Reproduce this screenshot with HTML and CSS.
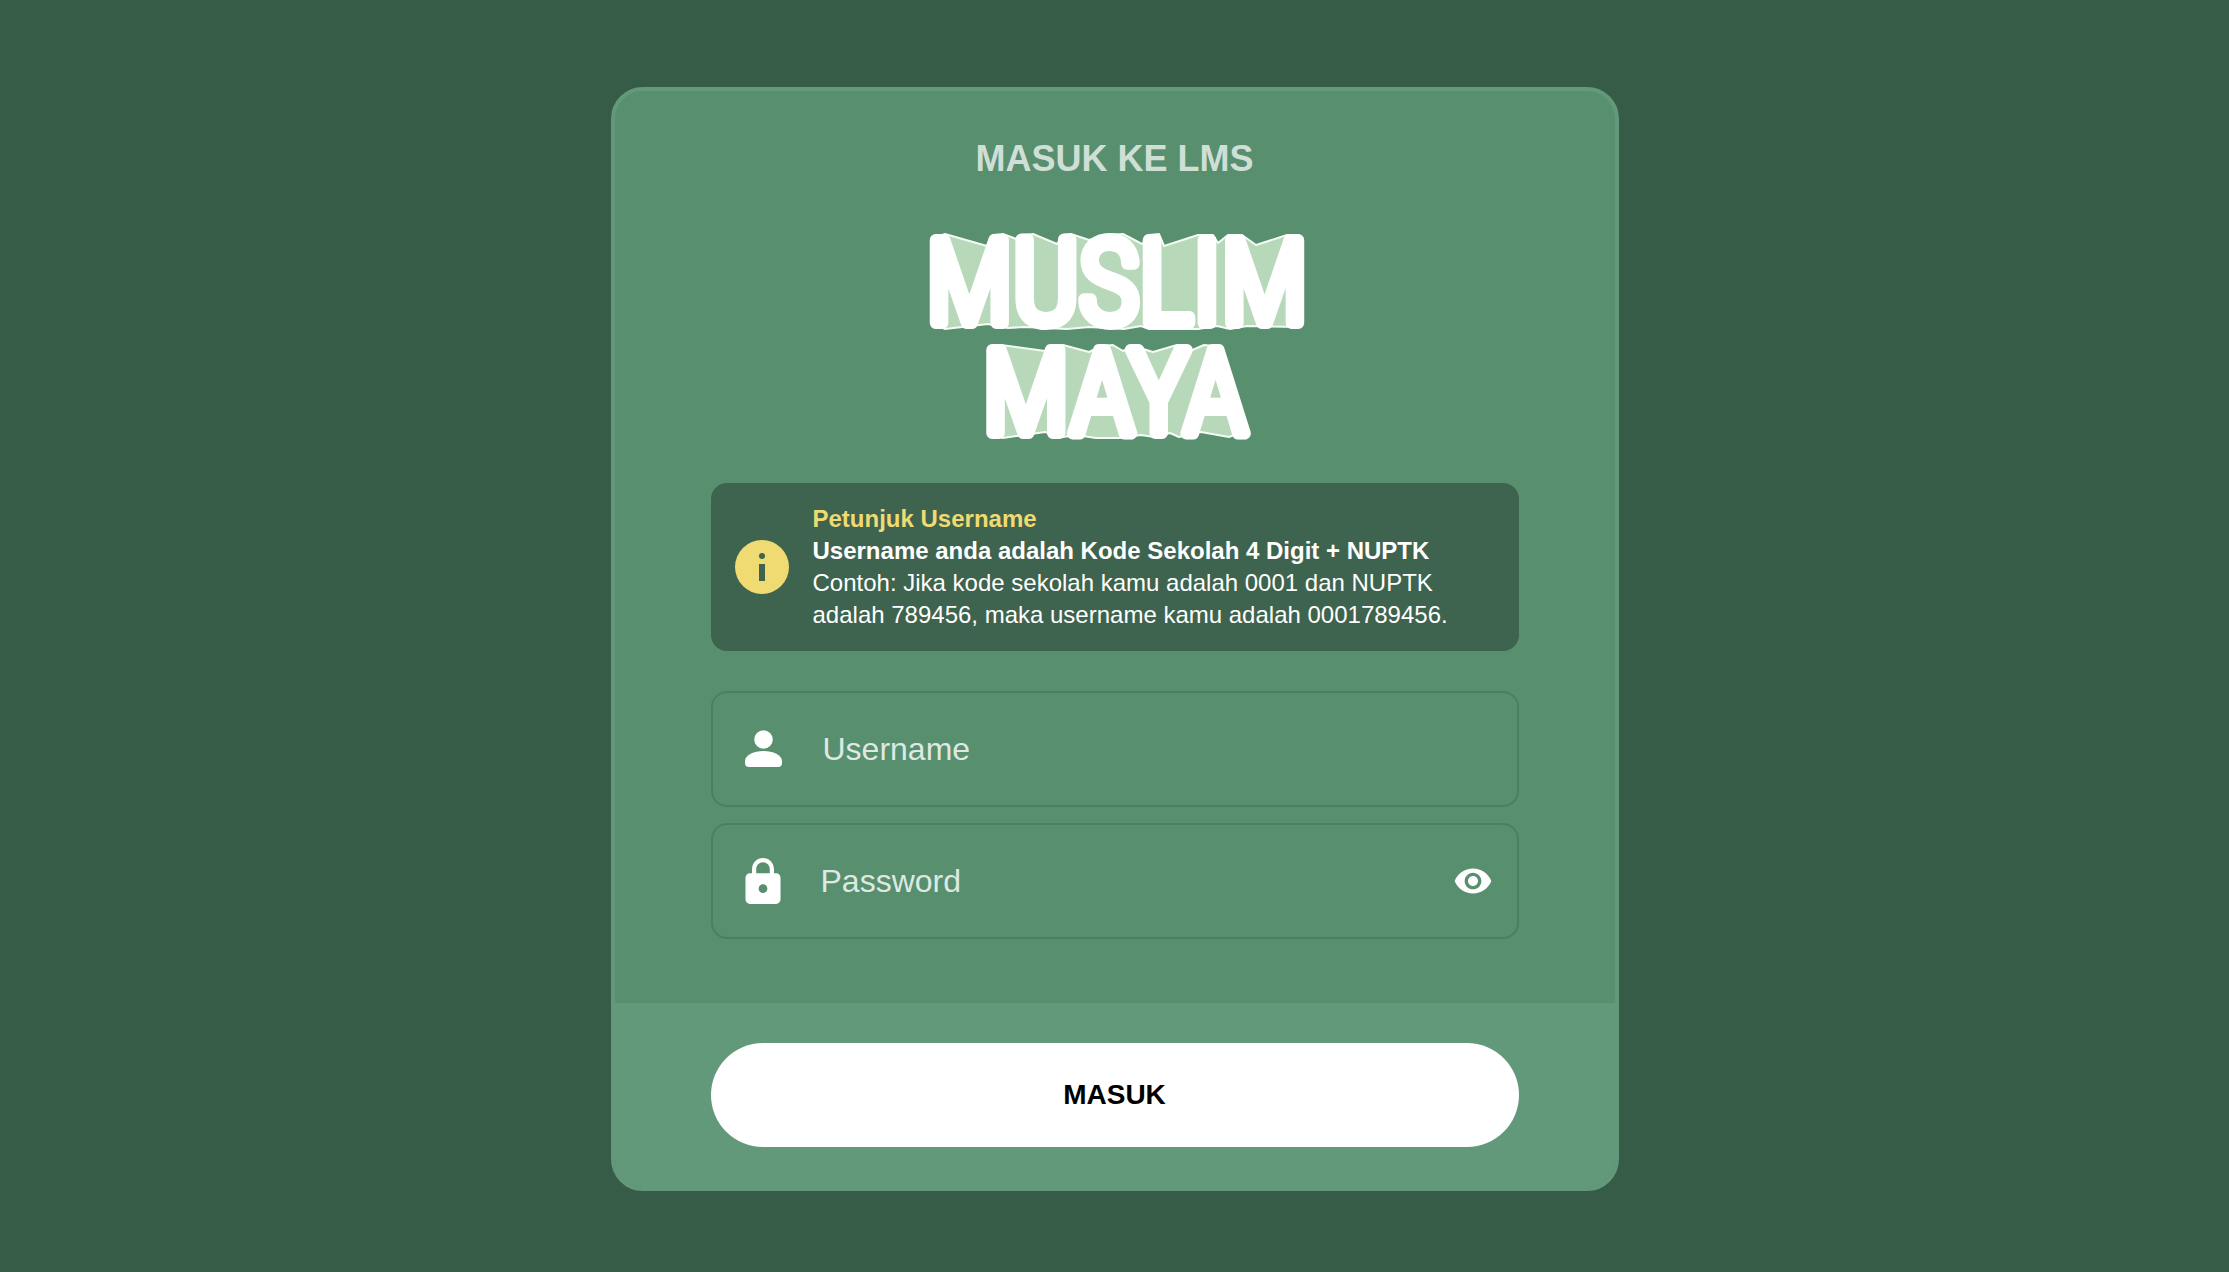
FILE: index.html
```html
<!DOCTYPE html>
<html lang="id">
<head>
<meta charset="utf-8">
<meta name="viewport" content="width=device-width, initial-scale=1">
<title>Masuk ke LMS</title>
<link rel="stylesheet" href="styles.css">
</head>
<body>
<main class="page">
  <form class="card">
    <div class="card-body">
      <h1 class="title">MASUK KE LMS</h1>
      <svg class="logo" viewBox="0 0 408 240" role="img" aria-label="Muslim Maya">
        <g class="logo-depth">
          <polygon points="34,19 76,31 82,20 92,19 108,25 114,20 122,19 146,29 152,20 160,19 178,25 195,20 212,19 231,29 238,20 248,19 253,31 287,20 302,20 307,28 317,20 331,20 345,30 376,20 386,24 386,112 336,111 319,114 306,111 287,114 238,114 230,111 213,114 178,112 156,114 113,112 97,113 77,109 34,114 26,110 26,22"/>
          <polygon points="90,130 134,136 142,131 152,130 178,137 190,131 202,130 212,136 222,131 242,137 266,130 279,136 293,130 304,131 328,218 318,222 290,217 268,222 259,218 243,222 230,220 208,223 185,223 165,220 152,222 134,217 92,223 82,219 82,131"/>
        </g>
        <text class="logo-text" x="206" y="108">MUSLIM</text>
        <text class="logo-text" x="204" y="218">MAYA</text>
      </svg>
      <section class="hint">
        <svg class="hint-icon" viewBox="0 0 54 54" aria-hidden="true">
          <circle class="hint-disc" cx="27" cy="27" r="27"/>
          <circle class="hint-mark" cx="27" cy="16" r="3"/>
          <path class="hint-mark" d="M24 24h6v17h-6z"/>
        </svg>
        <div class="hint-text">
          <h2 class="hint-title">Petunjuk Username</h2>
          <p><strong>Username anda adalah Kode Sekolah 4 Digit + NUPTK</strong></p>
          <p>Contoh: Jika kode sekolah kamu adalah 0001 dan NUPTK adalah 789456, maka username kamu adalah 0001789456.</p>
        </div>
      </section>
      <div class="fields">
        <div class="field">
          <label for="username" aria-label="Username">
            <svg class="icon" width="38" height="40" viewBox="1 0 38 40" aria-hidden="true">
              <circle cx="19.500" cy="10.500" r="9.300"/>
              <path d="M19.500 22C10 22 1 26 1 32v2q0 4 4 4h29q4 0 4-4v-2c0-6-9-10-18.500-10z"/>
            </svg>
          </label>
          <input class="input" id="username" type="text" placeholder="Username">
        </div>
        <div class="field">
          <label for="password" aria-label="Password">
            <svg class="icon" width="36" height="46" viewBox="4 1 16 21" aria-hidden="true">
              <path d="M18 8h-1V6c0-2.760-2.240-5-5-5S7 3.240 7 6v2H6c-1.100 0-2 .9-2 2v10c0 1.100.9 2 2 2h12c1.100 0 2-.9 2-2V10c0-1.100-.9-2-2-2zm-6 9c-1.100 0-2-.9-2-2s.9-2 2-2 2 .9 2 2-.9 2-2 2zM8.900 8V6c0-1.710 1.390-3.100 3.100-3.100s3.100 1.390 3.100 3.100v2z"/>
            </svg>
          </label>
          <input class="input" id="password" type="password" placeholder="Password">
          <button class="reveal" type="button" aria-label="Tampilkan password">
            <svg class="icon" width="40" height="40" viewBox="0 0 24 24" aria-hidden="true">
              <path d="M12 4.500C7 4.500 2.730 7.610 1 12c1.730 4.390 6 7.500 11 7.500s9.270-3.110 11-7.500c-1.730-4.390-6-7.500-11-7.500zM12 17c-2.760 0-5-2.240-5-5s2.240-5 5-5 5 2.240 5 5-2.240 5-5 5zm0-8c-1.660 0-3 1.340-3 3s1.340 3 3 3 3-1.340 3-3-1.340-3-3-3z"/>
            </svg>
          </button>
        </div>
      </div>
    </div>
    <div class="card-footer">
      <button class="submit" type="button">MASUK</button>
    </div>
  </form>
</main>
</body>
</html>
```
FILE: styles.css
```css
* {
  box-sizing: border-box;
}

body {
  margin: 0;
  background: #365c47;
  color: #fff;
  font-family: "Liberation Sans", Arial, sans-serif;
}

.page {
  display: flex;
  justify-content: center;
  padding: 87px 20px 80px;
}

.card {
  width: 100%;
  max-width: 1008px;
  border: 4px solid #62997b;
  border-radius: 32px;
  background: #578f6f;
  overflow: hidden;
}

.card-body {
  display: flex;
  flex-direction: column;
  padding: 48px 96px 64px;
}

.title {
  margin: 0 0 36px;
  color: #cfdfd6;
  font-size: 36px;
  line-height: 40px;
  text-align: center;
}

.logo {
  align-self: center;
  width: 408px;
  max-width: 100%;
  margin-bottom: 28px;
  overflow: visible;
}

.logo-depth {
  fill: #b8d8ba;
  stroke: #f4faf4;
  stroke-width: 2px;
  stroke-linejoin: round;
}

.logo-text {
  fill: #fff;
  stroke: #fff;
  stroke-width: 12px;
  stroke-linejoin: round;
  font-family: "Roboto Condensed", "Open Sans Condensed", sans-serif;
  font-size: 116px;
  font-weight: 300;
  text-anchor: middle;
}

.hint {
  display: flex;
  align-items: center;
  gap: 24px;
  margin-bottom: 40px;
  padding: 20px 24px;
  border-radius: 16px;
  background: #3e634e;
  font-size: 24px;
  line-height: 32px;
}

.hint-icon {
  flex: none;
  width: 54px;
  height: 54px;
}

.hint-disc {
  fill: #f0da72;
}

.hint-mark {
  fill: #3e634e;
}

.hint-title {
  margin: 0;
  color: #f0da72;
  font-size: 24px;
}

.hint-text p {
  margin: 0;
}

.fields {
  display: grid;
  gap: 16px;
}

.field {
  display: flex;
  align-items: center;
  height: 116px;
  padding: 0 24px 0 32px;
  border: 2px solid #4b7f62;
  border-radius: 16px;
}

.field label {
  display: flex;
  margin-right: 40px;
}

.icon {
  display: block;
  fill: #fff;
}

.input {
  flex: 1;
  min-width: 0;
  height: 100%;
  padding: 0;
  border: 0;
  outline: 0;
  background: none;
  color: #fff;
  font: inherit;
  font-size: 32px;
}

.input::placeholder {
  color: #dde9e2;
  opacity: 1;
}

.reveal {
  padding: 0;
  border: 0;
  background: none;
  cursor: pointer;
}

.card-footer {
  padding: 40px 96px;
  background: #62997b;
}

.submit {
  display: block;
  width: 100%;
  height: 104px;
  border: 0;
  border-radius: 52px;
  background: #fff;
  color: #000;
  font: inherit;
  font-size: 28px;
  font-weight: 700;
  cursor: pointer;
}
```
